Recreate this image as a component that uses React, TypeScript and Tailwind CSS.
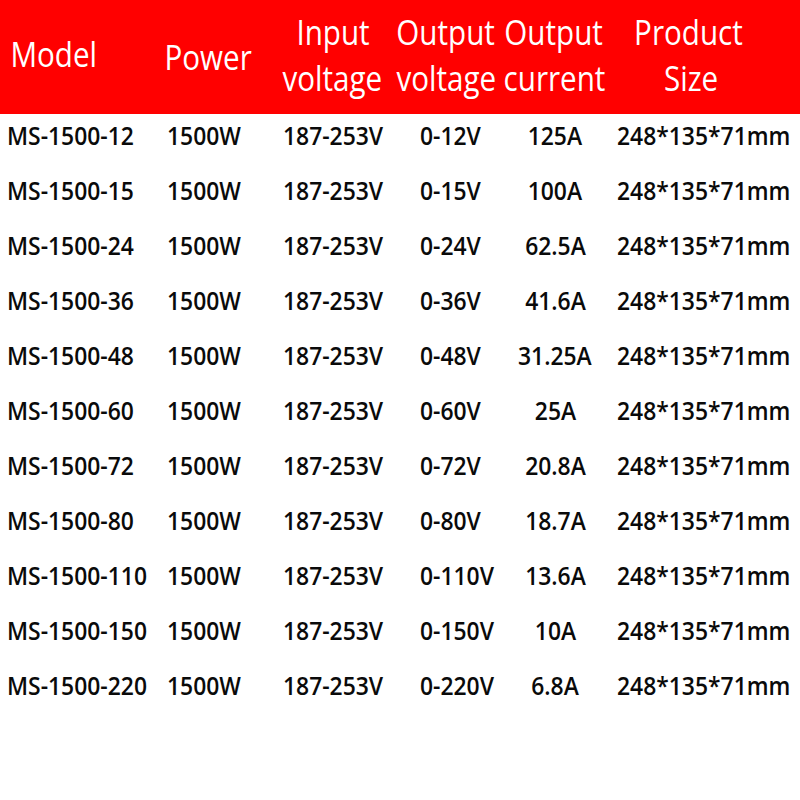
import React from "react";

const rows: [string, string, string][] = [
  ["MS-1500-12", "0-12V", "125A"],
  ["MS-1500-15", "0-15V", "100A"],
  ["MS-1500-24", "0-24V", "62.5A"],
  ["MS-1500-36", "0-36V", "41.6A"],
  ["MS-1500-48", "0-48V", "31.25A"],
  ["MS-1500-60", "0-60V", "25A"],
  ["MS-1500-72", "0-72V", "20.8A"],
  ["MS-1500-80", "0-80V", "18.7A"],
  ["MS-1500-110", "0-110V", "13.6A"],
  ["MS-1500-150", "0-150V", "10A"],
  ["MS-1500-220", "0-220V", "6.8A"],
];

function L({ children }: { children: React.ReactNode }) {
  return <span className="inline-block whitespace-nowrap origin-left scale-x-[0.88]">{children}</span>;
}
function C({ children }: { children: React.ReactNode }) {
  return <span className="inline-block whitespace-nowrap origin-center scale-x-[0.88]">{children}</span>;
}
function H({ children }: { children: React.ReactNode }) {
  return <span className="inline-block whitespace-nowrap origin-center scale-x-[0.87]">{children}</span>;
}

export default function App() {
  return (
    <div
      className="w-[800px] h-[800px] bg-white overflow-hidden"
      style={{ fontFamily: '"Open Sans", "Noto Sans", sans-serif' }}
    >
      <div className="h-[114px] bg-[#ff0000] text-white text-[34px] font-normal leading-[46px] flex items-start">
        <div className="w-[152px] shrink-0 pl-[4px] pt-[31px]">
          <H>Model</H>
        </div>
        <div className="w-[112px] shrink-0 pt-[34px] flex flex-col items-center">
          <H>Power</H>
        </div>
        <div className="w-[138px] shrink-0 pt-[9px] flex flex-col items-center">
          <H>Input</H>
          <div className="-ml-[2px]"><H>voltage</H></div>
        </div>
        <div className="w-[88px] shrink-0 pt-[9px] flex flex-col items-center">
          <H>Output</H>
          <H>voltage</H>
        </div>
        <div className="w-[128px] shrink-0 pt-[9px] flex flex-col items-center">
          <H>Output</H>
          <H>current</H>
        </div>
        <div className="w-[140px] shrink-0 pt-[9px] flex flex-col items-center">
          <H>Product</H>
          <div className="pl-[6px]"><H>Size</H></div>
        </div>
      </div>
      <div className="text-[26px] font-semibold text-[#0a0a0a]">
        {rows.map(([model, vout, cur]) => (
          <div key={model} className="h-[55px] leading-[43px] flex">
            <div className="w-[167px] shrink-0 pl-[7px]"><L>{model}</L></div>
            <div className="w-[116px] shrink-0"><L>1500W</L></div>
            <div className="w-[137px] shrink-0"><L>187-253V</L></div>
            <div className="w-[85px] shrink-0"><L>{vout}</L></div>
            <div className="w-[100px] shrink-0 flex justify-center"><C>{cur}</C></div>
            <div className="shrink-0 pl-[12px]"><L>248*135*71mm</L></div>
          </div>
        ))}
      </div>
    </div>
  );
}
